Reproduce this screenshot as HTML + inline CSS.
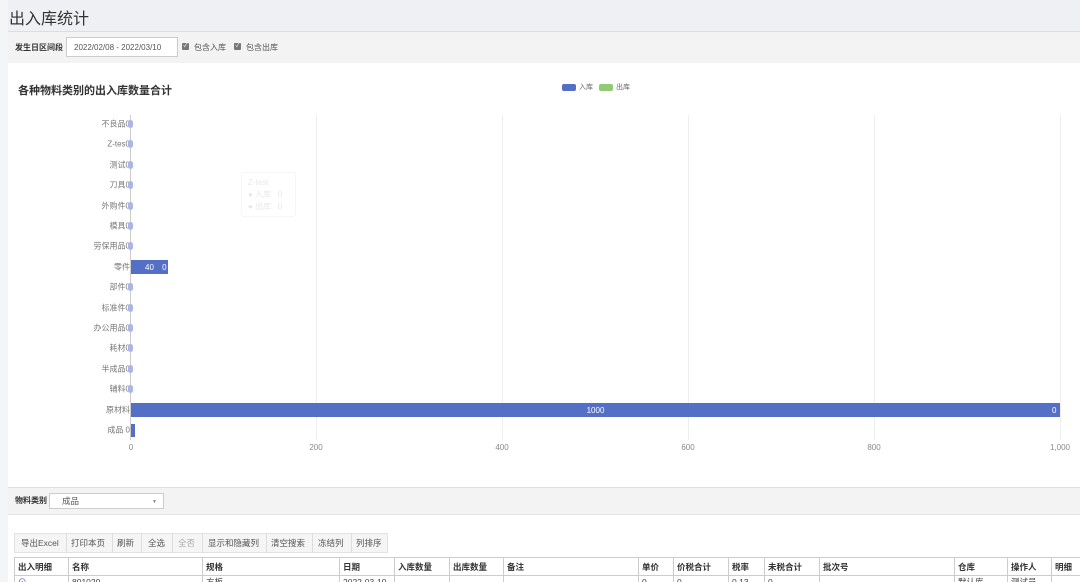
<!DOCTYPE html>
<html><head><meta charset="utf-8"><style>
*{margin:0;padding:0;box-sizing:border-box}
html,body{width:1080px;height:582px;overflow:hidden}
body{background:#eef0f4;font-family:"Liberation Sans","Noto Sans CJK SC",sans-serif;position:relative;color:#333}
.a{position:absolute}
.t{font-size:8px;color:#666;white-space:nowrap}
.lbl{position:absolute;font-size:8px;color:#777;right:950px;white-space:nowrap;transform:translateY(-50%)}
.dot{position:absolute;left:128px;width:5px;height:8px;border-radius:3px;background:#a9b6e6;transform:translateY(-50%)}
.grid{position:absolute;top:115px;height:325px;width:1px;background:#eee}
.ax{position:absolute;top:443px;font-size:8px;color:#888;transform:translateX(-50%)}
.btn{position:absolute;top:533px;height:20px;font-size:8.5px;color:#555;line-height:20px;border-right:1px solid #ddd;padding:0 7px}
th{font-size:8.5px;font-weight:bold;text-align:left;padding-left:3px;border:1px solid #ccc;height:18px;color:#333;white-space:nowrap;overflow:hidden}
td{border:1px solid #ccc;font-size:8.5px;padding-left:3px;height:10px;color:#444;white-space:nowrap;overflow:hidden}
.cb{position:absolute;top:43px;width:7px;height:7px;background:#777;border-radius:1px;color:#fff;font-size:6px;line-height:7px;text-align:center}
</style></head><body>
<div class="a" style="left:0;top:0;width:8px;height:582px;background:#f4f5f7"></div>
<div class="a" style="left:9px;top:5px;font-size:16px;color:#333">出入库统计</div>
<div class="a" style="left:8px;top:31px;width:1072px;height:32px;background:#f3f3f3;border-top:1px solid #ddd"></div>
<div class="a" style="left:15px;top:42px;font-size:8px;font-weight:bold">发生日区间段</div>
<div class="a" style="left:66px;top:37px;width:112px;height:20px;background:#fff;border:1px solid #ccc;font-size:8px;color:#555;padding:5px 0 0 7px">2022/02/08 - 2022/03/10</div>
<div class="cb" style="left:182px">✓</div>
<div class="a t" style="left:194px;top:42px;color:#555">包含入库</div>
<div class="cb" style="left:234px">✓</div>
<div class="a t" style="left:246px;top:42px;color:#555">包含出库</div>
<div class="a" style="left:8px;top:63px;width:1072px;height:424px;background:#fff"></div>
<div class="a" style="left:18px;top:82px;font-size:11px;font-weight:bold;color:#333">各种物料类别的出入库数量合计</div>
<div class="a" style="left:562px;top:84px;width:14px;height:7px;background:#5470c6;border-radius:2px"></div>
<div class="a t" style="left:579px;top:82px;font-size:7px">入库</div>
<div class="a" style="left:599px;top:84px;width:14px;height:7px;background:#91cc75;border-radius:2px"></div>
<div class="a t" style="left:616px;top:82px;font-size:7px">出库</div>
<div class="grid" style="left:316px"></div><div class="grid" style="left:502px"></div><div class="grid" style="left:688px"></div><div class="grid" style="left:874px"></div><div class="grid" style="left:1060px"></div>
<div class="a" style="left:130px;top:115px;width:1px;height:325px;background:#ccc"></div>
<div class="ax" style="left:131px">0</div><div class="ax" style="left:316px">200</div><div class="ax" style="left:502px">400</div><div class="ax" style="left:688px">600</div><div class="ax" style="left:874px">800</div><div class="ax" style="left:1060px">1,000</div>
<div class="lbl" style="top:124px">不良品0</div><div class="dot" style="top:124px"></div>
<div class="lbl" style="top:144px">Z-tes0</div><div class="dot" style="top:144px"></div>
<div class="lbl" style="top:165px">测试0</div><div class="dot" style="top:165px"></div>
<div class="lbl" style="top:185px">刀具0</div><div class="dot" style="top:185px"></div>
<div class="lbl" style="top:206px">外购件0</div><div class="dot" style="top:206px"></div>
<div class="lbl" style="top:226px">模具0</div><div class="dot" style="top:226px"></div>
<div class="lbl" style="top:246px">劳保用品0</div><div class="dot" style="top:246px"></div>
<div class="lbl" style="top:267px">零件</div>
<div class="a" style="left:131px;top:260px;width:37px;height:14px;background:#5470c6;color:#fff;font-size:8px;padding:3px 0 0 14px">40 <span style="margin-left:6px">0</span></div>
<div class="lbl" style="top:287px">部件0</div><div class="dot" style="top:287px"></div>
<div class="lbl" style="top:308px">标准件0</div><div class="dot" style="top:308px"></div>
<div class="lbl" style="top:328px">办公用品0</div><div class="dot" style="top:328px"></div>
<div class="lbl" style="top:348px">耗材0</div><div class="dot" style="top:348px"></div>
<div class="lbl" style="top:369px">半成品0</div><div class="dot" style="top:369px"></div>
<div class="lbl" style="top:389px">辅料0</div><div class="dot" style="top:389px"></div>
<div class="lbl" style="top:410px">原材料</div>
<div class="a" style="left:131px;top:403px;width:929px;height:14px;background:#5470c6;color:#fff;font-size:8px;text-align:center;padding-top:3px">1000</div>
<div class="a" style="left:1052px;top:406px;font-size:8px;color:#fff">0</div>
<div class="lbl" style="top:430px">成品 0</div><div class="a" style="left:131px;top:424px;width:4px;height:13px;background:#5470c6"></div>
<div class="a" style="left:241px;top:172px;width:55px;height:45px;border:1px solid #f6f6f6;border-radius:3px;font-size:8px;color:#e8e8e8;padding:4px 6px;line-height:12px">Z-test<br>● 入库 &nbsp;&nbsp;0<br>● 出库 &nbsp;&nbsp;0</div>
<div class="a" style="left:8px;top:487px;width:1072px;height:28px;background:#f3f3f3;border-top:1px solid #e0e0e0;border-bottom:1px solid #e4e4e4"></div>
<div class="a" style="left:15px;top:495px;font-size:8px;font-weight:bold">物料类别</div>
<div class="a" style="left:49px;top:493px;width:115px;height:16px;background:#fff;border:1px solid #ccc;font-size:8.5px;padding:2px 0 0 12px;color:#555;line-height:11px">成品<span style="position:absolute;right:6px;top:3px;font-size:5px;color:#888">▼</span></div>
<div class="a" style="left:8px;top:515px;width:1072px;height:67px;background:#fff"></div>
<div class="a" style="left:14px;top:533px;width:374px;height:20px;background:#f5f5f5;border:1px solid #e2e2e2"></div>
<div class="btn" style="left:14px">导出Excel</div><div class="btn" style="left:64px">打印本页</div><div class="btn" style="left:110px">刷新</div><div class="btn" style="left:141px">全选</div><div class="btn" style="left:171px;color:#aaa">全否</div><div class="btn" style="left:201px">显示和隐藏列</div><div class="btn" style="left:264px">清空搜索</div><div class="btn" style="left:311px">冻结列</div><div class="btn" style="left:349px;border:none">列排序</div>
<table class="a" style="left:14px;top:557px;border-collapse:collapse;table-layout:fixed;width:1070px">
<colgroup><col style="width:54px"><col style="width:134px"><col style="width:137px"><col style="width:55px"><col style="width:55px"><col style="width:54px"><col style="width:135px"><col style="width:35px"><col style="width:55px"><col style="width:36px"><col style="width:55px"><col style="width:135px"><col style="width:53px"><col style="width:44px"><col style="width:33px"></colgroup>
<tr><th>出入明细</th><th>名称</th><th>规格</th><th>日期</th><th>入库数量</th><th>出库数量</th><th>备注</th><th>单价</th><th>价税合计</th><th>税率</th><th>未税合计</th><th>批次号</th><th>仓库</th><th>操作人</th><th>明细</th></tr>
<tr><td style="color:#36c">⊙</td><td>801020</td><td>方板</td><td>2022-03-10</td><td></td><td></td><td></td><td>0</td><td>0</td><td>0.13</td><td>0</td><td></td><td>默认库</td><td>测试员</td><td></td></tr>
</table>
</body></html>
